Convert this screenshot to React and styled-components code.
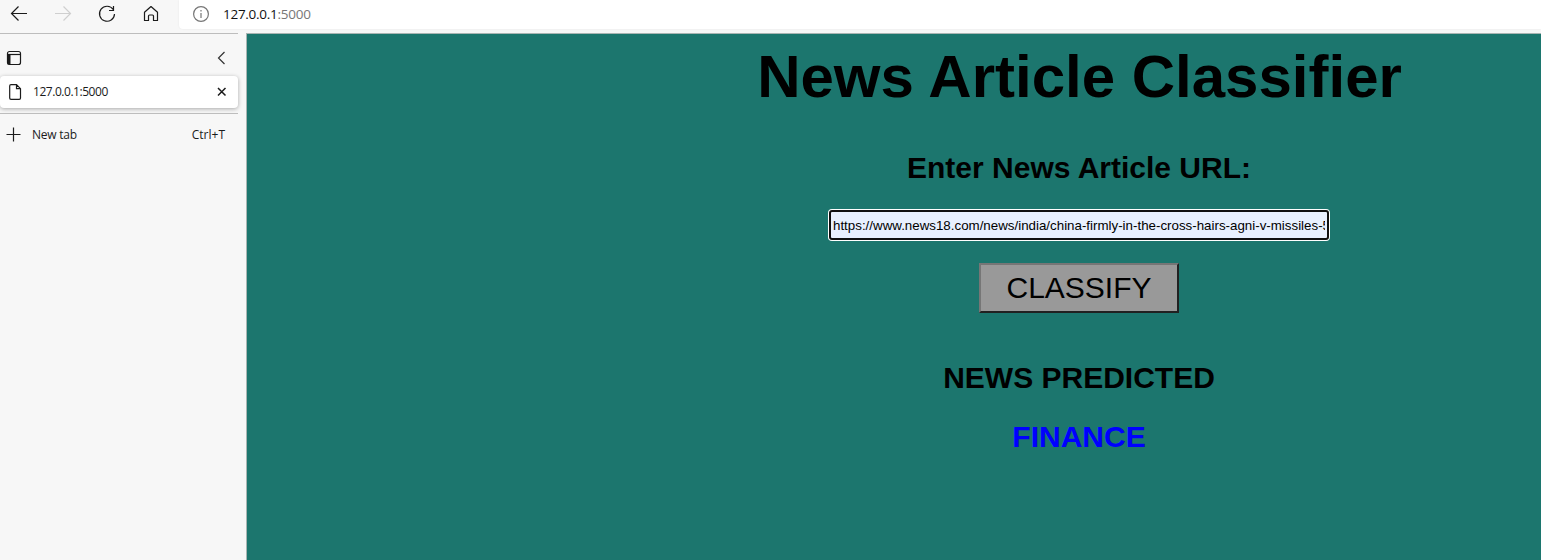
import React from 'react';
import styled, { createGlobalStyle } from 'styled-components';

const GlobalStyle = createGlobalStyle`
  *, *::before, *::after { box-sizing: border-box; }
  body { margin: 0; background: #f7f7f7; overflow: hidden; }
`;

const Browser = styled.div`
  display: flex;
  flex-direction: column;
  width: 100%;
  height: 560px;
  overflow: hidden;
  background: #f7f7f7;
  color: #1b1b1b;
  font-family: 'Open Sans', 'Noto Sans', sans-serif;
`;

const Toolbar = styled.header`
  display: flex;
  flex: none;
  height: 33px;
`;

const NavButtons = styled.nav`
  display: flex;
  flex: none;
  gap: 26px;
  width: 179px;
  height: 28px;
  padding-left: 10px;
  align-items: center;
`;

const Icon = styled.svg`
  display: block;
  flex: none;
  width: ${(p) => p.$size || 18}px;
  height: ${(p) => p.$size || 18}px;
  fill: none;
  stroke: ${(p) => p.$color || '#1b1b1b'};
  stroke-width: ${(p) => p.$weight || 1.2};
`;

const AddressBar = styled.div`
  display: flex;
  flex: 1;
  align-items: center;
  gap: 13px;
  height: 29px;
  padding: 0 0 1px 13px;
  border-bottom-left-radius: 4px;
  background: #fff;
  box-shadow: 0 0 2px rgba(0, 0, 0, 0.08);
`;

const Address = styled.span`
  color: #111;
  font-size: 13.5px;
  line-height: 20px;
  letter-spacing: -0.27px;
`;

const Port = styled.span`
  color: #777;
`;

const Body = styled.div`
  display: flex;
  flex: 1;
  min-height: 0;
`;

const Sidebar = styled.aside`
  flex: none;
  width: 238px;
  margin-right: 8px;
  border-top: 1px solid #bdbdbd;
`;

const SidebarRow = styled.div`
  display: flex;
  align-items: center;
  justify-content: space-between;
  height: ${(p) => p.$height}px;
  padding: ${(p) => p.$padding};
`;

const TabItem = styled(SidebarRow)`
  border-radius: 4px;
  background: #fff;
  box-shadow: 0 1px 4px rgba(0, 0, 0, 0.32);
`;

const Divider = styled.div`
  height: 1px;
  margin-top: 5px;
  background: #bdbdbd;
`;

const RowLabel = styled.div`
  display: flex;
  align-items: center;
  gap: ${(p) => p.$gap}px;
`;

const SmallText = styled.span`
  font-size: 12px;
  line-height: 16px;
  letter-spacing: ${(p) => p.$spacing || 0}px;
`;

const Viewport = styled.main`
  flex: 1;
  min-width: 0;
  overflow: hidden;
  border-top: 1px solid #a9b5b3;
  border-left: 1px solid #a9b5b3;
  background: #1c766e;
`;

const Page = styled.div`
  display: flex;
  flex-direction: column;
  align-items: center;
  width: 1664px;
  padding-top: 8px;
  color: #000;
  font-family: 'Liberation Sans', Arial, sans-serif;
`;

const Title = styled.h1`
  margin: 0 0 40px;
  padding-left: 1px;
  font-size: 60px;
  line-height: 69px;
`;

const Heading = styled.h2`
  margin: 0 0 26px;
  color: ${(p) => p.$color || '#000'};
  font-size: 30px;
  line-height: 33px;
`;

const UrlInput = styled.input`
  width: 500px;
  height: 30px;
  padding: 1px 2px;
  border: 2px solid #101010;
  border-radius: 3px;
  outline: none;
  box-shadow: 0 0 0 1px #fff;
  background: #e8f0fe;
  color: #000;
  font: 13.333px 'Liberation Sans', Arial, sans-serif;
`;

const ClassifyButton = styled.button`
  width: 200px;
  height: 50px;
  margin: 23px 0 48px;
  padding: 0;
  border: 2px solid;
  border-color: #767676 #212121 #212121 #767676;
  background: #999;
  color: #000;
  font: 30px/34px 'Liberation Sans', Arial, sans-serif;
`;

const articleUrl =
  'https://www.news18.com/news/india/china-firmly-in-the-cross-hairs-agni-v-missiles-5000';

export default function App() {
  return (
    <Browser>
      <GlobalStyle />
      <Toolbar>
        <NavButtons>
          <Icon viewBox="0 0 18 18">
            <path d="M17 8.500H1.500M8.500 1.500l-7 7 7 7" />
          </Icon>
          <Icon viewBox="0 0 18 18" $color="#cfcfcf">
            <path d="M1 8.500h15.500M9.500 1.500l7 7-7 7" />
          </Icon>
          <Icon viewBox="0 0 18 18">
            <path d="M15.200 4.500A7.500 7.500 0 1 0 16.500 9M15.500 1v4.500H11" />
          </Icon>
          <Icon viewBox="0 0 18 18">
            <path d="M2.500 7.200 9 1.500l6.500 5.700V15.500h-4V11q0-1-1-1h-3q-1 0-1 1v4.500h-4z" strokeLinejoin="round" />
          </Icon>
        </NavButtons>
        <AddressBar>
          <Icon viewBox="0 0 18 18" $color="#767676">
            <circle cx="9" cy="9" r="7.400" />
            <path d="M9 8v5M9 5v1.500" />
          </Icon>
          <Address>
            127.0.0.1<Port>:5000</Port>
          </Address>
        </AddressBar>
      </Toolbar>
      <Body>
        <Sidebar>
          <SidebarRow $height={42} $padding="6px 8px 0 6px">
            <Icon viewBox="0 0 16 16" $size={16}>
              <rect x="1.500" y="1.500" width="13" height="13" rx="2" />
              <path d="M1.500 4.500h13" />
              <path d="M3 4.500v10" strokeWidth="3" />
            </Icon>
            <Icon viewBox="0 0 16 16" $size={16} $color="#333">
              <path d="M10.500 2 4.500 8l6 6" />
            </Icon>
          </SidebarRow>
          <TabItem $height={32} $padding="0 8px 0 7px">
            <RowLabel $gap={10}>
              <Icon viewBox="0 0 16 16" $size={16}>
                <path d="M4 .7h5.500l4 4V14q0 1.300-1.300 1.300H4q-1.300 0-1.300-1.300V2Q2.700.7 4 .7zM9.500.7v4h4" />
              </Icon>
              <SmallText $spacing={-0.46}>127.0.0.1:5000</SmallText>
            </RowLabel>
            <Icon viewBox="0 0 16 16" $size={16} $weight={1.5}>
              <path d="m4 4 7.500 7.500M11.500 4l-7.500 7.500" />
            </Icon>
          </TabItem>
          <Divider />
          <SidebarRow $height={41} $padding="0 13px 0 5px">
            <RowLabel $gap={11}>
              <Icon viewBox="0 0 16 16" $size={16}>
                <path d="M8.500.500v14M1.500 7.500h14" />
              </Icon>
              <SmallText $spacing={-0.25}>New tab</SmallText>
            </RowLabel>
            <SmallText>Ctrl+T</SmallText>
          </SidebarRow>
        </Sidebar>
        <Viewport>
          <Page>
            <Title>News Article Classifier</Title>
            <Heading>Enter News Article URL:</Heading>
            <UrlInput defaultValue={articleUrl} spellCheck={false} />
            <ClassifyButton type="button">CLASSIFY</ClassifyButton>
            <Heading>NEWS PREDICTED</Heading>
            <Heading $color="#0000ff">FINANCE</Heading>
          </Page>
        </Viewport>
      </Body>
    </Browser>
  );
}
